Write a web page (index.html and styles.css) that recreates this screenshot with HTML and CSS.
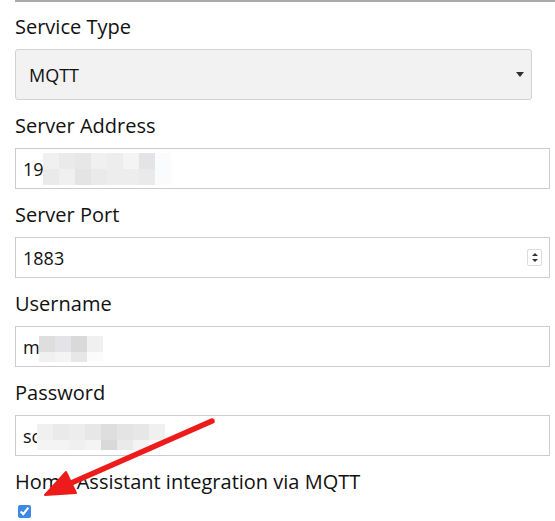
FILE: index.html
```html
<!DOCTYPE html>
<html lang="en">
<head>
<meta charset="utf-8">
<title>MQTT settings</title>
<link rel="stylesheet" href="styles.css">
</head>
<body>
<form class="panel">
  <div class="field">
    <label class="label" for="svc">Service Type</label>
    <div class="select-wrap">
      <select id="svc" class="select"><option>MQTT</option></select>
      <span class="caret"></span>
    </div>
  </div>
  <div class="field">
    <label class="label" for="addr">Server Address</label>
    <div class="control">
      <input id="addr" class="input" type="text" value="19">
      <span class="mosaic mosaic-addr">
        <i class="c2"></i><i class="c4"></i><i class="c5"></i><i class="c2"></i><i class="c3"></i><i class="c1"></i><i class="c6"></i><i class="c0"></i>
        <i class="c4"></i><i class="c2"></i><i class="c6"></i><i class="c4"></i><i class="c3"></i><i class="c3"></i><i class="c4"></i><i class="c0"></i>
      </span>
    </div>
  </div>
  <div class="field">
    <label class="label" for="port">Server Port</label>
    <div class="control">
      <input id="port" class="input" type="text" value="1883">
      <span class="spinner"><span class="up"></span><span class="down"></span></span>
    </div>
  </div>
  <div class="field">
    <label class="label" for="user">Username</label>
    <div class="control">
      <input id="user" class="input" type="text" value="m">
      <span class="mosaic mosaic-user">
        <i class="c7"></i><i class="c6"></i><i class="c8"></i><i class="c2"></i>
        <i class="c2"></i><i class="c1"></i><i class="c5"></i><i class="c0"></i>
      </span>
    </div>
  </div>
  <div class="field">
    <label class="label" for="pass">Password</label>
    <div class="control">
      <input id="pass" class="input" type="text" value="sc">
      <span class="mosaic mosaic-pass">
        <i class="c2"></i><i class="c4"></i><i class="c3"></i><i class="c5"></i><i class="c7"></i><i class="c6"></i><i class="c5"></i><i class="c2"></i>
        <i class="c1"></i><i class="c1"></i><i class="c2"></i><i class="c1"></i><i class="c8"></i><i class="c4"></i><i class="c1"></i><i class="c0"></i>
      </span>
    </div>
  </div>
  <div class="field">
    <label class="label" for="ha">Home Assistant integration via MQTT</label>
    <div class="check-row">
      <input id="ha" class="check" type="checkbox" checked>
    </div>
  </div>
</form>
<svg class="annot" width="555" height="521" viewBox="0 0 555 521" aria-hidden="true">
  <line x1="212" y1="421" x2="62" y2="487" stroke="#ee1b1b" stroke-width="5.5" stroke-linecap="round"/>
  <polygon points="45,495 66,472 76,493" fill="#ee1b1b" stroke="#ee1b1b" stroke-width="2" stroke-linejoin="round"/>
</svg>
</body>
</html>
```

FILE: styles.css
```css
html, body {
  margin: 0;
  padding: 0;
  background: #ffffff;
}

body {
  font-family: "Open Sans", "Noto Sans", sans-serif;
  color: #111111;
  width: 555px;
  height: 521px;
  overflow: hidden;
  position: relative;
}

.panel {
  margin-left: 15px;
  padding-right: 5px;
  border-top: 2px solid #a9a9a9;
  padding-top: 8px;
}

.field {
  margin-bottom: 9px;
}

.label {
  display: block;
  font-size: 20px;
  line-height: 30px;
  padding-top: 2px;
  margin-bottom: 7px;
}

.select-wrap {
  position: relative;
  width: 517px;
}

.select {
  -webkit-appearance: none;
  appearance: none;
  display: block;
  width: 100%;
  height: 51px;
  box-sizing: border-box;
  margin: 0;
  padding: 0 30px 0 13px;
  font-family: inherit;
  font-size: 18px;
  color: #111111;
  background: #f2f2f2;
  border: 1px solid #d2d2d2;
  border-radius: 3px;
  outline: none;
}

.caret {
  position: absolute;
  right: 8px;
  top: 23px;
  width: 0;
  height: 0;
  border-left: 4.5px solid transparent;
  border-right: 4.5px solid transparent;
  border-top: 5px solid #2e2e2e;
}

.control {
  position: relative;
}

.input {
  display: block;
  width: 100%;
  height: 41px;
  box-sizing: border-box;
  margin: 0;
  padding: 0 7px;
  font-family: inherit;
  font-size: 18px;
  color: #111111;
  background: #ffffff;
  border: 1px solid #cccccc;
  border-radius: 0;
  outline: none;
}

.mosaic {
  position: absolute;
  display: grid;
  grid-template-columns: repeat(8, 16px);
}

.mosaic i {
  display: block;
}

.mosaic-addr {
  left: 28px;
  top: 5px;
  grid-template-rows: 16px 16px;
}

.mosaic-user {
  left: 24px;
  top: 10px;
  grid-template-columns: repeat(4, 16px);
  grid-template-rows: 16px 10px;
}

.mosaic-pass {
  left: 22px;
  top: 9px;
  grid-template-rows: 16px 10px;
}

.c0 { background: #fafbfd; }
.c1 { background: #f4f4f4; }
.c2 { background: #f0f0f0; }
.c3 { background: #ededed; }
.c4 { background: #eaeaea; }
.c5 { background: #e7e7e7; }
.c6 { background: #e4e4e6; }
.c7 { background: #dfdedf; }
.c8 { background: #d9d9d9; }

.spinner {
  position: absolute;
  right: 8px;
  top: 12px;
  width: 15px;
  height: 17px;
  box-sizing: border-box;
  border: 1px solid #dcdcdc;
  border-radius: 2px;
  background: #ffffff;
}

.spinner .up,
.spinner .down {
  position: absolute;
  left: 3.5px;
  width: 0;
  height: 0;
  border-left: 3px solid transparent;
  border-right: 3px solid transparent;
}

.spinner .up {
  top: 3px;
  border-bottom: 3px solid #333333;
}

.spinner .down {
  top: 9px;
  border-top: 3px solid #333333;
}

.check-row {
  display: flex;
  padding-top: 1px;
}

.check {
  width: 13px;
  height: 13px;
  margin: 0 0 0 3px;
  accent-color: #3d87e6;
}

.annot {
  position: absolute;
  left: 0;
  top: 0;
  pointer-events: none;
}
```
